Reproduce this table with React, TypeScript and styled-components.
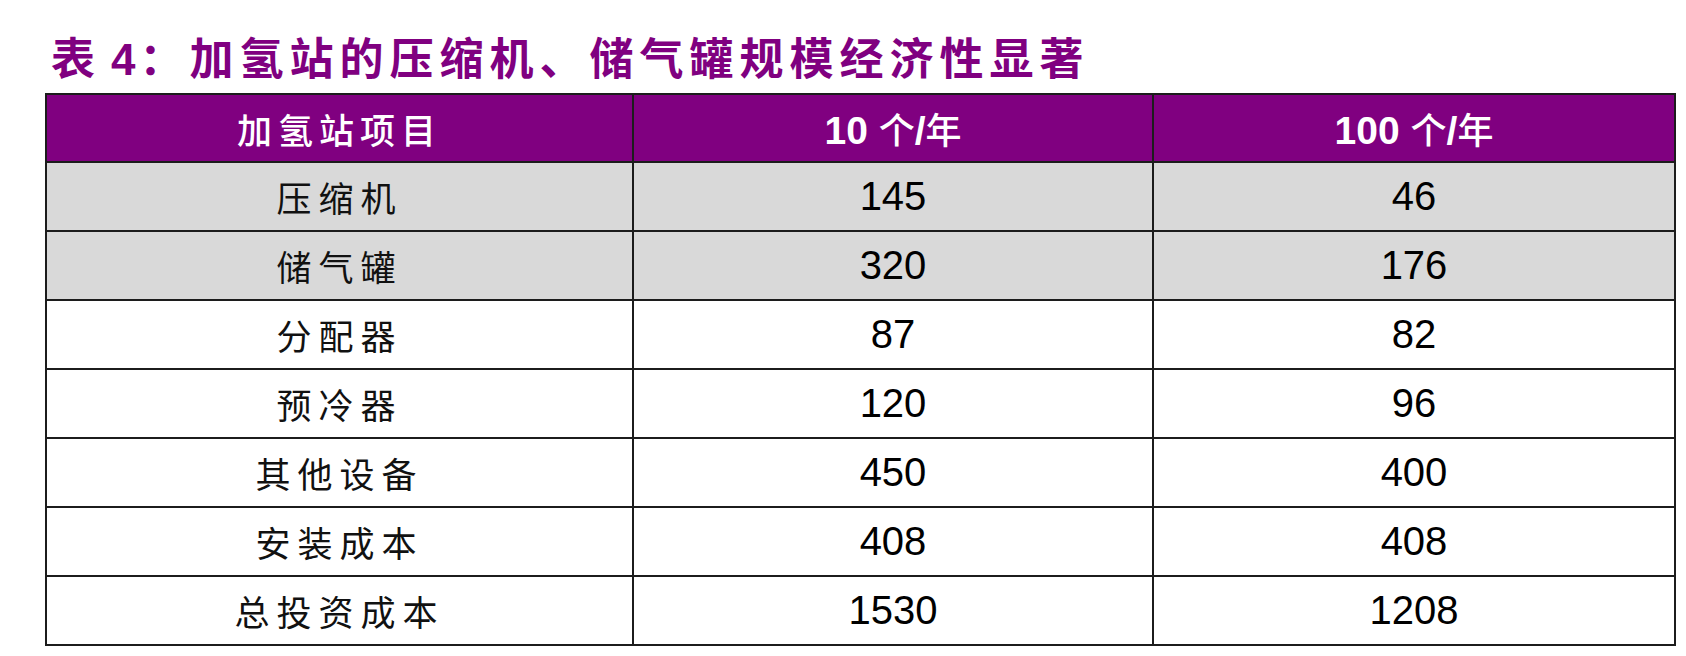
import React from "react";
import styled, { createGlobalStyle } from "styled-components";

const GlobalStyle = createGlobalStyle`
  html, body { margin: 0; padding: 0; background: #ffffff; }
  body { font-family: "Liberation Sans", "Noto Sans CJK SC", sans-serif; }
`;

const Page = styled.div`
  width: 1686px;
  height: 656px;
  background: #ffffff;
  padding: 31px 0 0 45px;
  box-sizing: border-box;
`;

const Title = styled.h1`
  margin: 0 0 0 6px;
  height: 62px;
  font-family: "Noto Sans CJK SC", sans-serif;
  font-size: 44px;
  line-height: 50px;
  font-weight: 700;
  letter-spacing: 6px;
  color: #800080;
  white-space: nowrap;
`;

const Num = styled.span`
  font-family: "Liberation Sans", sans-serif;
  font-weight: 700;
  letter-spacing: 0;
  margin: 0 4px 0 10px;
`;

const Table = styled.table`
  width: 1629px;
  border-collapse: collapse;
  table-layout: fixed;
  border: 2px solid #1c1c1c;
`;

const HeadCell = styled.th<{ $cjk?: boolean }>`
  height: 66px;
  padding: 0;
  background: #800080;
  color: #ffffff;
  border: 2px solid #1c1c1c;
  font-family: ${(p) =>
    p.$cjk ? '"Noto Sans CJK SC", sans-serif' : '"Liberation Sans", "Noto Sans CJK SC", sans-serif'};
  font-size: ${(p) => (p.$cjk ? "35px" : "39px")};
  font-weight: ${(p) => (p.$cjk ? 500 : 700)};
  letter-spacing: ${(p) => (p.$cjk ? "6px" : "0")};
  text-align: center;
  vertical-align: middle;
`;

const HeadCjk = styled.span`
  font-family: "Noto Sans CJK SC", sans-serif;
  font-weight: 500;
  font-size: 36px;
`;

const Row = styled.tr<{ $shaded?: boolean }>`
  background: ${(p) => (p.$shaded ? "#d9d9d9" : "#ffffff")};
`;

const LabelCell = styled.td`
  height: 67px;
  padding: 0;
  border: 2px solid #1c1c1c;
  font-family: "Noto Sans CJK SC", sans-serif;
  font-size: 35px;
  font-weight: 400;
  letter-spacing: 7px;
  color: #111111;
  text-align: center;
  vertical-align: middle;
`;

const ValueCell = styled.td`
  height: 67px;
  padding: 0;
  border: 2px solid #1c1c1c;
  font-family: "Liberation Sans", sans-serif;
  font-size: 40px;
  color: #000000;
  text-align: center;
  vertical-align: middle;
`;

const rows: { name: string; a: string; b: string; shaded?: boolean }[] = [
  { name: "压缩机", a: "145", b: "46", shaded: true },
  { name: "储气罐", a: "320", b: "176", shaded: true },
  { name: "分配器", a: "87", b: "82" },
  { name: "预冷器", a: "120", b: "96" },
  { name: "其他设备", a: "450", b: "400" },
  { name: "安装成本", a: "408", b: "408" },
  { name: "总投资成本", a: "1530", b: "1208" },
];

export default function App() {
  return (
    <Page>
      <GlobalStyle />
      <Title>
        表<Num>4</Num>：加氢站的压缩机、储气罐规模经济性显著
      </Title>
      <Table>
        <colgroup>
          <col style={{ width: "587px" }} />
          <col style={{ width: "520px" }} />
          <col style={{ width: "522px" }} />
        </colgroup>
        <thead>
          <tr>
            <HeadCell $cjk>加氢站项目</HeadCell>
            <HeadCell>
              10 <HeadCjk>个</HeadCjk>/<HeadCjk>年</HeadCjk>
            </HeadCell>
            <HeadCell>
              100 <HeadCjk>个</HeadCjk>/<HeadCjk>年</HeadCjk>
            </HeadCell>
          </tr>
        </thead>
        <tbody>
          {rows.map((r) => (
            <Row key={r.name} $shaded={r.shaded}>
              <LabelCell>{r.name}</LabelCell>
              <ValueCell>{r.a}</ValueCell>
              <ValueCell>{r.b}</ValueCell>
            </Row>
          ))}
        </tbody>
      </Table>
    </Page>
  );
}
